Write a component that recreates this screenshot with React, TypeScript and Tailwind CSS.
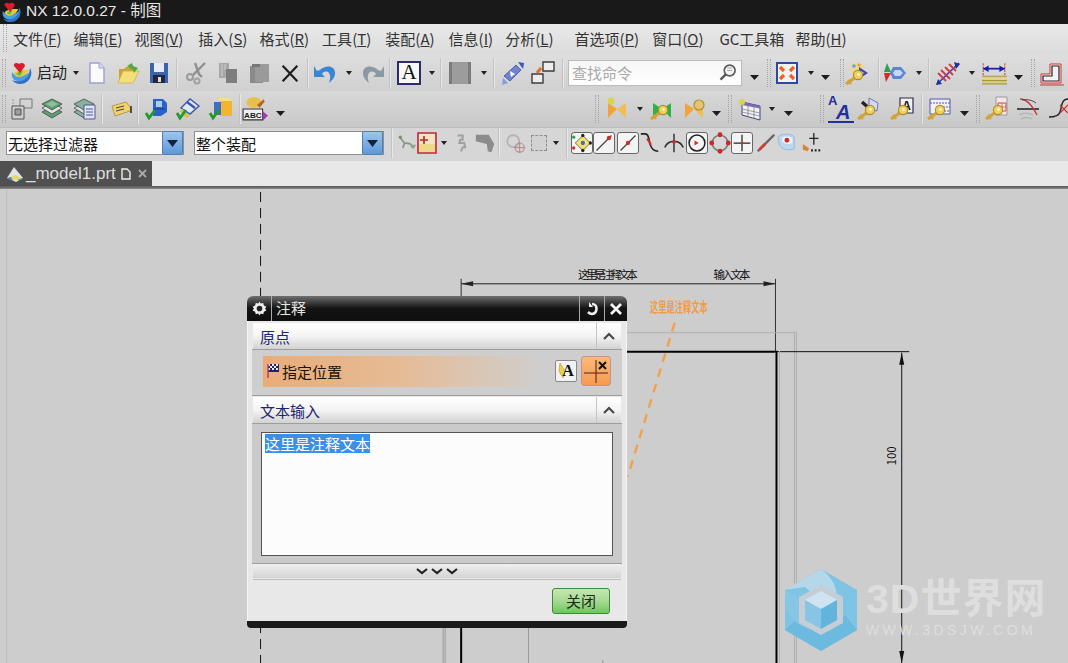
import React from "react";

const S = ({ c, children }: { c: string; children?: React.ReactNode }) => (
  <div className={`flex h-full shrink-0 items-center justify-center ${c}`}>{children}</div>
);
const Grip = ({ c = "w-[6px]" }: { c?: string }) => (
  <div className={`flex h-full shrink-0 items-center justify-center ${c}`}>
    <div className="h-[28px] w-[4px] border-x border-dotted border-[#a4a4a4]" />
  </div>
);
const Sep = ({ c = "w-[4px]" }: { c?: string }) => (
  <div className={`flex h-full shrink-0 items-center justify-center ${c}`}>
    <div className="h-[30px] w-[2px] border-l border-r border-l-[#c2c2c2] border-r-[#e8e8e8]" />
  </div>
);
const Dd = ({ c }: { c: string }) => (
  <div className={`flex h-full shrink-0 items-center justify-center ${c}`}>
    <svg width="6" height="4" viewBox="0 0 6 4"><path d="M0 0h6L3 4z" fill="#222" /></svg>
  </div>
);
const DdB = ({ c }: { c: string }) => (
  <div className={`flex h-full shrink-0 items-center justify-center pt-[9px] ${c}`}>
    <svg width="9" height="5" viewBox="0 0 9 5"><path d="M0 0h9L4.5 5z" fill="#1c1c1c" /></svg>
  </div>
);
const Ic = ({ children, size = 24 }: { children: React.ReactNode; size?: number }) => (
  <svg width={size} height={size} viewBox="0 0 24 24" className="shrink-0 overflow-visible">{children}</svg>
);

const Globe = ({ size = 24 }: { size?: number }) => (
  <Ic size={size}>
    <path d="M20 7c3 5 1 12-5 15-5 2-10 1-13-3 4 2 9 2 13-2 3-3 5-6 5-10z" fill="#2f72c8" />
    <path d="M2 11c-1 5 1 8 5 9 6 1 11-3 13-9-4 3-9 5-13 4-2-1-4-2-5-4z" fill="#48a0e0" />
    <path d="M4 12c3-3 9-4 15-3-2 4-6 7-10 7-3 0-5-2-5-4z" fill="#eac83c" />
    <path d="M6 13c2-2 5-3 7-3l-3 5z" fill="#62b84a" />
    <path d="M10 12 4 5C3 2 7 1 9 3c2-2 6-1 6 2z" fill="#d81e2c" />
  </Ic>
);
const KeyI = () => (
  <g>
    <path d="M1 22l10-7" stroke="#d0a436" strokeWidth="3.2" />
    <path d="M3 18l3 4" stroke="#d0a436" strokeWidth="2.4" />
    <circle cx="13" cy="13" r="4.6" fill="#ecd060" stroke="#b48a24" strokeWidth="1.1" />
    <circle cx="13.5" cy="12.5" r="1.4" fill="#fff6c0" />
  </g>
);
const Bow = ({ a = "#f2a33c", b = "#f4bc54" }: { a?: string; b?: string }) => (
  <g>
    <path d="M3 6l9 6-9 9z" fill={a} />
    <path d="M21 6l-9 6 9 9z" fill={b} />
  </g>
);
const Check = () => <path d="M1 16l3 5 6-8" fill="none" stroke="#1f9a2c" strokeWidth="2.8" />;

const Doc = () => (
  <Ic><path d="M5 2h9l5 5v15H5z" fill="#fbfbfb" stroke="#9c9fdc" strokeWidth="1.4" /><path d="M14 2v5h5" fill="#dedff0" stroke="#9c9fdc" /></Ic>
);
const Open = () => (
  <Ic><path d="M3 8h5l2-2h8v5H7L3 21z" fill="#c9a33a" /><path d="M7 10h16l-6 12H2z" fill="#f4e07a" stroke="#cfae44" strokeWidth=".8" /><path d="M11 5l5-3 1 3 5 2-4 5-1-3z" fill="#52a83c" /></Ic>
);
const Save = () => (
  <Ic><path d="M3 2h18v20H3z" fill="#3c64ac" /><path d="M7 2h10v9H7z" fill="#e6eaf2" /><path d="M6 14h12v8H6z" fill="#23273c" /><path d="M11 16h3v5h-3z" fill="#d8dde8" /></Ic>
);
const Cut = () => (
  <Ic><path d="M21 2 9 14M11 2l4 11 3 3" stroke="#8f8f8f" strokeWidth="2.4" fill="none" /><circle cx="6" cy="16" r="3" fill="none" stroke="#9a9a9a" strokeWidth="2" /><circle cx="13" cy="20" r="2.6" fill="none" stroke="#a2a2a2" strokeWidth="2" /></Ic>
);
const Copy = () => (
  <Ic><path d="M3 2h10v15H3z" fill="#a8a8a8" /><path d="M10 8h11v14H10z" fill="#7e7e7e" /><path d="M6 3v12M9 3v6" stroke="#cfcfcf" /></Ic>
);
const Paste = () => (
  <Ic><path d="M3 5h13v17H3z" fill="#8a8a8a" /><path d="M8 3h14v18H8z" fill="#9a9a9a" /><path d="M5 3h8v3H5z" fill="#777" /></Ic>
);
const XI = () => (
  <Ic size={22}><path d="M4 4l16 17M20 4 4 21" stroke="#1e1e1e" strokeWidth="2.4" /></Ic>
);
const Undo = ({ gray }: { gray?: boolean }) => (
  <Ic>
    <g transform={gray ? "translate(24,0) scale(-1,1)" : undefined}>
      <path d="M7 9c5-5 14-5 15 2 .5 4-2 8-6 11 1-3 2-7 0-10-2-2-5-2-7 1l3 3H1V5l3 5z" fill={gray ? "#8b9aa2" : "#3a86d4"} />
    </g>
  </Ic>
);
const ABox = () => (
  <div className="flex h-[24px] w-[24px] items-center justify-center border-2 border-[#2b2b70] bg-[#f8f8f8] [font-family:'Liberation_Serif',serif] text-[21px] leading-none text-[#111]">A</div>
);
const Rect = () => <div className="h-[22px] w-[22px] border-x-[3px] border-[#7c7c7c] bg-[#9c9c9c]" />;
const Diamond = () => (
  <Ic><path d="M15 4l5 5-11 11-6-5z" fill="#6f83d0" stroke="#3b4fa0" strokeWidth=".8" /><path d="M9 10l5 3-4 3z" fill="#fff" /><path d="M17 1l6 1-1 6z" fill="#3357c4" /><path d="M2 17l5 5-6 2z" fill="#7f9ee0" /></Ic>
);
const Squares = () => (
  <Ic><path d="M12 1h11v9H12zM1 13h11v9H1z" fill="#ededed" stroke="#3c3c3c" strokeWidth="1.4" /><path d="M6 12l4-5" stroke="#e0702a" strokeWidth="3" /></Ic>
);
const Lens = () => (
  <Ic size={20}><circle cx="14" cy="9" r="6.5" fill="#f4f4f4" stroke="#5a5a5a" strokeWidth="2" /><path d="M10 13l-7 7M5 16l2 2" stroke="#5a5a5a" strokeWidth="3" /><path d="M11 6h6M11 9h6" stroke="#9a9a9a" /></Ic>
);
const Fit = () => (
  <Ic>
    <path d="M2 2h20v20H2z" fill="#f4f2ee" stroke="#2b4aa8" strokeWidth="2" />
    <path d="M5 6l4 4M19 6l-4 4M5 18l4-4M19 18l-4-4" stroke="#e8642c" strokeWidth="3.2" />
  </Ic>
);
const Wheel = () => (
  <Ic><path d="M5 2h9l4 3-2 8H5z" fill="#ecd98e" /><circle cx="8" cy="5" r="1.8" fill="#5aa7d8" /><circle cx="13" cy="4" r="1.6" fill="#e89a3a" /><path d="M13 6l9 6-9 6z" fill="#3f49a8" /><path d="M15 10l3 2-3 2z" fill="#dfe6f6" /><g transform="translate(-1,1)"><KeyI /></g></Ic>
);
const Valve = () => (
  <Ic><path d="M10 6h8l5 6-5 6h-8l-3-6z" fill="#5a84d4" /><path d="M12 9h5l3 3-3 3h-5l-2-3z" fill="#c8d6f2" /><path d="M4 2l4 9H1z" fill="#2fa050" /><path d="M1 12h7l-5 9z" fill="#d52a2a" /></Ic>
);
const Spring = () => (
  <Ic><path d="M1 23 23 2" stroke="#2a3fb8" strokeWidth="1.6" /><path d="M5 9l9 9M9 6l8 8M2 12l8 8M13 3l7 7" stroke="#cc3a44" strokeWidth="1.8" /><path d="M18 1l6 2-4 5zM6 23l-6 1 2-6z" fill="#1f2f9c" /></Ic>
);
const Dim = () => (
  <Ic size={26}><path d="M2 3v12M22 3v12" stroke="#c04848" strokeDasharray="2 1" /><path d="M2 8h20" stroke="#1a1aa8" strokeWidth="1.6" /><path d="M2 8l5-3v6zM22 8l-5-3v6z" fill="#1a1aa8" /><path d="M1 15h23v7H1z" fill="#ddd090" /><path d="M1 15h23M1 19h23M1 22h23" stroke="#a8983c" /></Ic>
);
const Step = () => (
  <Ic><path d="M1 13h9V3h11v19H1z" fill="#f2f2f2" stroke="#d03030" strokeWidth="1" /><path d="M3 15h9V5h7v15H3z" fill="none" stroke="#222" strokeWidth="1.2" /><path d="M0 24h24" stroke="#d03030" /></Ic>
);
const R2a = () => (
  <Ic><path d="M10 2h12v9H10z" fill="none" stroke="#777" /><path d="M3 2v10" stroke="#999" strokeDasharray="2 1" /><path d="M2 9h12v13H2z" fill="#cfcfcf" stroke="#555" /><path d="M5 12h6v6H5z" fill="#9c9c9c" stroke="#555" /></Ic>
);
const Layers = ({ a, b }: { a: string; b: string }) => (
  <g stroke="#3e4a44" strokeWidth=".8">
    <path d="M2 15l10-5 10 5-10 6z" fill={b} />
    <path d="M2 11l10-5 10 5-10 6z" fill={a} />
    <path d="M2 7l10-5 10 5-10 6z" fill={b} />
  </g>
);
const Stack = () => <Ic><Layers a="#e4e4e4" b="#5f9e74" /><path d="M6 7l6-3 6 3-6 3z" fill="#8fbf9a" /></Ic>;
const Stack2 = () => (
  <Ic><Layers a="#dcdcdc" b="#88b09a" /><path d="M12 8h11v14H12z" fill="#dfe3f2" stroke="#50589c" /><path d="M14 12h7M14 15h7M14 18h7" stroke="#50589c" /></Ic>
);
const Tag = () => (
  <Ic><path d="M2 9l14-4 5 6-1 3-15 5z" fill="#f0d468" stroke="#a38a40" strokeWidth=".8" /><path d="M6 11l8-2M6 14l8-2" stroke="#444" /><path d="M21 9v7" stroke="#333" strokeWidth="1.6" /></Ic>
);
const Sh1 = () => (
  <Ic><path d="M8 2h10l4 4v9l-6 4H8z" fill="#2b62c8" /><path d="M11 4h6v6h-6z" fill="#aecbf0" /><path d="M8 12h12" stroke="#174aa0" strokeWidth="1.5" /><Check /></Ic>
);
const Sh2 = () => (
  <Ic><path d="M5 11l9-9 9 7-9 8z" fill="#e4e8f2" stroke="#3b55b4" strokeWidth="1.4" /><path d="M11 5l8 6" stroke="#3b55b4" strokeWidth="2.4" /><path d="M5 13l7 7" stroke="#d8c23c" strokeWidth="3.4" /><Check /></Ic>
);
const Sh3 = () => (
  <Ic><path d="M5 5h8v13H5z" fill="#3f6ec0" /><path d="M12 4h11v15H12z" fill="#f2b62e" /><path d="M12 4 9 1h10l4 3z" fill="#f8df80" /><Check /></Ic>
);
const Abc = () => (
  <Ic size={26}><ellipse cx="11" cy="6" rx="7" ry="5" fill="#e6c24c" /><path d="M14 8l6-5 1 2-5 6z" fill="#b5652c" /><path d="M1 12h18v10H1z" fill="#f0f0f0" stroke="#333" /><text x="10" y="20.5" textAnchor="middle" fontSize="7.5" fontWeight="700" fill="#222" fontFamily="Liberation Sans">ABC</text><path d="M19 14l5 4-5 5z" fill="#a43aa8" /></Ic>
);
const AA = () => (
  <div className="relative h-[26px] w-[26px] shrink-0 [font-family:'Liberation_Sans',sans-serif] font-bold text-[#1f2f9c]">
    <span className="absolute left-0 top-[-2px] text-[13px] leading-none">A</span>
    <span className="absolute left-[8px] top-[6px] text-[20px] italic leading-none">A</span>
    <span className="absolute bottom-[-1px] left-0 h-[2px] w-[26px] bg-[#1f2f9c]" />
  </div>
);
const KeyBrush = () => (
  <Ic><path d="M5 5l8 7" stroke="#222" strokeWidth="3.4" /><path d="M12 1l9 5-1 8-8-2z" fill="#d2d8ee" stroke="#5a62a0" strokeWidth=".8" /><KeyI /></Ic>
);
const KeyA = () => (
  <Ic><path d="M10 1h13v15H10z" fill="#f2f2f2" stroke="#2c2c50" strokeWidth="1.2" /><text x="16.5" y="13" textAnchor="middle" fontSize="12" fontWeight="700" fill="#111" fontFamily="Liberation Sans">A</text><KeyI /></Ic>
);
const KeyTbl = () => (
  <Ic><path d="M3 2h20v15H3z" fill="#f1f1f1" stroke="#5158b4" /><path d="M3 6h20M10 10h13M14 14h9" stroke="#5158b4" strokeDasharray="2 1" /><KeyI /></Ic>
);
const KeyDoc = () => (
  <Ic><path d="M11 0h11v18H11z" fill="#f4e6e6" stroke="#9a9a9a" /><path d="M13 6h8v8h-8z" fill="none" stroke="#d04848" /><path d="M17 6v8M13 10h8" stroke="#d04848" strokeWidth=".7" /><KeyI /></Ic>
);
const Cross = () => (
  <Ic><path d="M1 12h22" stroke="#111" strokeWidth="1.4" /><path d="M4 2c6 0 12 6 17 16" stroke="#c83a3c" fill="none" strokeWidth="1.4" /><path d="M6 3c5-1 10 0 14 3" stroke="#444" fill="none" /><path d="M3 18c6-3 10-2 14 0M5 22c4-2 8-2 11 0" stroke="#aaa" fill="none" /></Ic>
);
const Curve = () => (
  <Ic><path d="M22 2c-7 0-6 8-8 13-1 3-5 5-11 5" stroke="#222" fill="none" strokeWidth="1.4" /><path d="M14 8l8 8M22 8l-8 8" stroke="#cc3030" strokeWidth="1.2" /></Ic>
);
const Grid = () => (
  <Ic><path d="M4 5l18 4v14L4 18z" fill="#f2f2f4" stroke="#44447a" /><path d="M4 5l18 4v2.5L4 8z" fill="#7b6cbc" /><path d="M10 7v12M16 8v13M4 12l18 4M4 15l18 4" stroke="#778" strokeWidth=".7" /><circle cx="4" cy="5" r="3" fill="#dcd448" /></Ic>
);
const Gray1 = () => (
  <Ic size={20}><path d="M4 6l5 6 7 1 3 5M9 12l-2 6" stroke="#8b9a88" strokeWidth="2.2" fill="none" /><circle cx="4" cy="5" r="2" fill="#6f9a68" /><path d="M16 14h7l-3 5z" fill="#92a48e" /></Ic>
);
const RedBox = () => (
  <Ic size={24}><path d="M3 2h18v20H3z" fill="#efe6c4" stroke="#c8203a" strokeWidth="1.6" /><path d="M4 13h16v8H4z" fill="#ecd98a" /><path d="M5 9h8M9 5v8" stroke="#c02030" strokeWidth="1.6" /></Ic>
);
const Gray2 = () => (
  <Ic size={20}><path d="M8 3h6v5h-3l-1 4h6l1 5h-3l-2 5" stroke="#a0a0a0" strokeWidth="2.4" fill="none" /></Ic>
);
const Gray3 = () => (
  <Ic size={22}><path d="M2 3h14l6 10-3 9-4-1-1-8-12-3z" fill="#8b8b8b" /></Ic>
);
const Gray4 = () => (
  <Ic size={22}><circle cx="9" cy="10" r="6.5" fill="none" stroke="#b4b4b4" strokeWidth="2" /><circle cx="16" cy="17" r="5" fill="none" stroke="#b88f8f" strokeWidth="1.2" /><path d="M16 11v12M10 17h12" stroke="#b88080" /></Ic>
);
const Dashed = () => <div className="h-[16px] w-[16px] border border-dashed border-[#8e8e8e] bg-[#d2d2d2]" />;

const Boxed = ({ children }: { children: React.ReactNode }) => (
  <div className="flex h-[22px] w-[22px] shrink-0 items-center justify-center rounded-[3px] border border-[#666] bg-[#f4f4f4]">{children}</div>
);
const Snap = ({ kind }: { kind: string }) => {
  if (kind === "multi")
    return (
      <Ic size={20}><path d="M13 3l9 9-9 9-9-9z" fill="#f4e36a" stroke="#333" strokeWidth=".8" /><circle cx="2" cy="5" r="2" fill="#2fa050" /><circle cx="2" cy="18" r="2" fill="#d52a2a" /><circle cx="13" cy="3" r="2" fill="#222" /><circle cx="22" cy="12" r="2" fill="#222" /><circle cx="13" cy="21" r="2" fill="#222" /><circle cx="13" cy="12" r="2.6" fill="#3f6ec0" /></Ic>
    );
  if (kind === "line")
    return <Ic size={20}><path d="M3 21 21 3" stroke="#444" strokeWidth="1.4" /><circle cx="18" cy="6" r="2.6" fill="#d52a2a" /></Ic>;
  if (kind === "mid")
    return <Ic size={20}><path d="M3 21 21 3" stroke="#444" strokeWidth="1.4" /><circle cx="12" cy="12" r="2.6" fill="#d52a2a" /></Ic>;
  if (kind === "curve")
    return <Ic size={22}><path d="M2 2h5c4 0 4 7 5 11s3 8 9 8" stroke="#222" fill="none" strokeWidth="1.8" /><path d="M9 7l4 7" stroke="#d52a2a" strokeWidth="2.4" /></Ic>;
  if (kind === "perp")
    return <Ic size={22}><path d="M2 17c3-9 17-9 20 0" stroke="#333" fill="none" strokeWidth="1.8" /><path d="M12 2v20" stroke="#333" strokeWidth="1.6" /><circle cx="12" cy="11" r="2" fill="#d52a2a" /></Ic>;
  if (kind === "center")
    return <Ic size={20}><circle cx="12" cy="12" r="9.5" fill="none" stroke="#222" strokeWidth="1.8" /><path d="M9 9l5 3-5 3z" fill="#d52a2a" /></Ic>;
  if (kind === "quad")
    return <Ic size={22}><circle cx="12" cy="12" r="8.5" fill="none" stroke="#777" strokeWidth="1.8" /><circle cx="12" cy="3" r="2.6" fill="#c8282a" /><circle cx="12" cy="21" r="2.6" fill="#c8282a" /><circle cx="3" cy="12" r="2.6" fill="#c8282a" /><circle cx="21" cy="12" r="2.6" fill="#c8282a" /></Ic>;
  if (kind === "plus")
    return <Ic size={20}><path d="M12 2v20M2 12h20" stroke="#222" strokeWidth="1.5" /><circle cx="12" cy="12" r="1.4" fill="#d52a2a" /></Ic>;
  if (kind === "seg")
    return <Ic size={22}><path d="M3 21 21 3" stroke="#666" strokeWidth="2.6" /><path d="M5 19l6-6" stroke="#d04030" strokeWidth="3" /></Ic>;
  if (kind === "bubble")
    return <Ic size={22}><path d="M3 6c3-5 16-5 18 0v12c-6 3-14 1-16-4z" fill="#bcd8f0" stroke="#8cb8dc" /><path d="M8 6c3-2 9-1 11 1v5c-4 2-9 1-11-2z" fill="#eef4fa" /><circle cx="13" cy="9" r="2.6" fill="#d52a2a" /></Ic>;
  return <Ic size={22}><path d="M14 1v13M9 7h10" stroke="#222" strokeWidth="1.4" /><path d="M2 13l7 5-2 3-5-2z" fill="#d6853a" /><path d="M11 20h2M15 20h2M19 20h2" stroke="#222" strokeWidth="2.4" /></Ic>;
};

const Menu = ({ t, u, c }: { t: string; u: string; c: string }) => (
  <span className={`shrink-0 whitespace-nowrap ${c}`}>
    {t}(<span className="underline">{u}</span>)
  </span>
);

const Combo = ({ t, c }: { t: string; c: string }) => (
  <div className={`flex h-[24px] shrink-0 items-center border border-[#8f8f8f] bg-white pl-[1px] text-[15px] leading-none text-[#111] ${c}`}>
    <span className="flex-1">{t}</span>
    <div className="flex h-[24px] w-[21px] items-center justify-center rounded-[2px] border border-[#4e7fb8] bg-gradient-to-b from-[#9cc6ee] to-[#5f98d6]">
      <svg width="11" height="7" viewBox="0 0 11 7"><path d="M0 0h11L5.5 7z" fill="#14233c" /></svg>
    </div>
  </div>
);

const Chevron = () => (
  <svg width="12" height="8" viewBox="0 0 12 8"><path d="M1 7l5-5 5 5" fill="none" stroke="#4a4a4a" strokeWidth="2.2" /></svg>
);

const SectionHead = ({ t }: { t: string }) => (
  <div className="mx-[5px] flex h-[26px] items-stretch bg-gradient-to-b from-white via-[#f4f4f4] to-[#d2d2d2]">
    <div className="flex flex-1 items-center pl-[7px] text-[15px] leading-none text-[#1a2470]">{t}</div>
    <div className="flex w-[25px] items-center justify-center border-l border-[#c4c4c4]"><Chevron /></div>
  </div>
);

const Drawing = () => (
  <svg className="absolute inset-0 h-full w-full" viewBox="0 188 1068 475">
    <path d="M5.5 188V663" stroke="#bcbcbc" strokeWidth="1" />
    <path d="M260 191V663" stroke="#111" strokeWidth="1" strokeDasharray="10 6" />
    <path d="M461 278V300M776 278V351" stroke="#333" strokeWidth="1" />
    <path d="M461 283H776" stroke="#222" strokeWidth="1" />
    <path d="M461 283l12-2.5v5zM776 283l-12-2.5v5z" fill="#222" />
    <text x="578" y="278" fontSize="11.5" fill="#111" textLength="60">这里是注释文本</text>
    <text x="714" y="278" fontSize="11.5" fill="#111" textLength="37">输入文本</text>
    <path d="M620 332H797M797 331V663M795 331V663" stroke="#b0b0b0" strokeWidth="1" />
    <path d="M620 351H776" stroke="#000" strokeWidth="2" />
    <path d="M776 351H910" stroke="#111" strokeWidth="1" />
    <path d="M777 350V663" stroke="#000" strokeWidth="2" />
    <path d="M780 350V663" stroke="#b0b0b0" strokeWidth="1" />
    <path d="M902.5 352V663" stroke="#111" strokeWidth="1" />
    <path d="M902.5 352l-2.5 12h5zM902.5 663l-2.5-12h5z" fill="#111" />
    <text x="0" y="0" fontSize="11.5" fill="#111" transform="translate(897,465) rotate(-90)">100</text>
    <path d="M443 627V663M445 627V663M528.5 627V663M603 660V663" stroke="#9a9a9a" strokeWidth="1" />
    <path d="M461 627V663" stroke="#000" strokeWidth="2" />
    <text className="blur-[0.6px]" x="650" y="311" fontSize="14" fontWeight="700" fill="#f29a44" textLength="58" lengthAdjust="spacingAndGlyphs">这里是注释文本</text>
    <path d="M675 322 628 476" stroke="#f2a04c" strokeWidth="2.4" strokeDasharray="9 7" />
  </svg>
);

const Logo = () => (
  <svg width="72" height="82" viewBox="0 0 72 82" className="shrink-0">
    <path d="M36 0 72 21V61L36 82 0 61V21z" fill="#7fc3e5" />
    <path d="M36 0C50 10 56 25 48 42L20 18 0 21z" fill="#b4d8ea" />
    <path d="M0 21C-2 40 6 55 20 58L12 28z" fill="#88c6e6" />
    <path d="M10 52c12 12 35 12 50-6l12 15-36 21L0 61z" fill="#6cbae0" />
    <path d="M36 16 58 28V54L36 66 14 54V28z" fill="#c4ced4" />
    <path d="M36 22 52 31V51L36 60 20 51V31z" fill="#b9dcee" />
    <path d="M36 22 52 31 36 40 20 31z" fill="#cfe4f0" />
    <path d="M20 31 36 40V60L20 51z" fill="#88c4e4" />
    <path d="M52 31 36 40V60L52 51z" fill="#62b4dc" />
  </svg>
);

export default function App() {
  return (
    <div className="relative flex h-[663px] w-[1068px] flex-col overflow-hidden bg-[#cdcdcd] [font-family:'Noto_Sans_CJK_SC','Liberation_Sans',sans-serif]">
      {/* title */}
      <div className="flex h-[24px] shrink-0 items-center bg-[#191919] pl-[1px] text-[15.5px] leading-none text-[#e8e8e8]">
        <Globe size={22} />
        <span className="ml-[3px] pb-[3px] [font-family:'Liberation_Sans','Noto_Sans_CJK_SC',sans-serif]">NX 12.0.0.27 - 制图</span>
      </div>
      {/* menu */}
      <div className="flex h-[30px] shrink-0 items-center bg-gradient-to-b from-[#e9e9e9] to-[#dcdcdc] pb-[2px] text-[15px] leading-none text-[#333]">
        <Grip c="w-[8px] ml-[1px]" />
        <Menu t="文件" u="F" c="ml-[4px]" />
        <Menu t="编辑" u="E" c="ml-[12px]" />
        <Menu t="视图" u="V" c="ml-[12px]" />
        <Menu t="插入" u="S" c="ml-[15px]" />
        <Menu t="格式" u="R" c="ml-[12px]" />
        <Menu t="工具" u="T" c="ml-[13px]" />
        <Menu t="装配" u="A" c="ml-[14px]" />
        <Menu t="信息" u="I" c="ml-[14px]" />
        <Menu t="分析" u="L" c="ml-[12px]" />
        <Menu t="首选项" u="P" c="ml-[21px]" />
        <Menu t="窗口" u="O" c="ml-[13px]" />
        <span className="ml-[16px] shrink-0">GC工具箱</span>
        <Menu t="帮助" u="H" c="ml-[11px]" />
      </div>
      {/* toolbar 1 */}
      <div className="flex h-[37px] shrink-0 items-center overflow-hidden bg-gradient-to-b from-[#dedede] to-[#d0d0d0]">
        <Grip c="w-[8px]" />
        <S c="w-[28px]"><Globe /></S>
        <S c="w-[36px] justify-start pl-[1px] text-[15px] text-[#222]">启动</S>
        <Dd c="w-[8px]" />
        <S c="w-[34px]"><Doc /></S>
        <S c="w-[28px]"><Open /></S>
        <S c="w-[34px]"><Save /></S>
        <Sep c="w-[2px]" />
        <S c="w-[36px]"><Cut /></S>
        <S c="w-[28px]"><Copy /></S>
        <S c="w-[34px]"><Paste /></S>
        <S c="w-[28px]"><XI /></S>
        <Sep c="w-[8px]" />
        <S c="w-[26px]"><Undo /></S>
        <Dd c="w-[22px]" />
        <S c="w-[26px]"><Undo gray /></S>
        <Sep c="w-[8px]" />
        <S c="w-[30px]"><ABox /></S>
        <Dd c="w-[16px]" />
        <Sep c="w-[2px]" />
        <S c="w-[36px]"><Rect /></S>
        <Dd c="w-[12px]" />
        <Sep c="w-[8px]" />
        <S c="w-[30px]"><Diamond /></S>
        <S c="w-[30px]"><Squares /></S>
        <Sep c="w-[10px]" />
        <div className="flex h-[26px] w-[174px] shrink-0 items-center justify-between border border-[#bcbcbc] bg-gradient-to-b from-[#f6f6f6] to-[#ffffff] px-[3px] text-[15px] leading-none text-[#a9a9a9]">
          <span>查找命令</span>
          <Lens />
        </div>
        <DdB c="w-[24px]" />
        <Grip />
        <S c="w-[30px]"><Fit /></S>
        <Dd c="w-[18px]" />
        <DdB c="w-[10px]" />
        <div className="w-[8px] shrink-0" />
        <Grip c="w-[8px]" />
        <S c="w-[24px]"><Wheel /></S>
        <Sep c="w-[18px]" />
        <S c="w-[14px]"><Valve /></S>
        <div className="w-[12px] shrink-0" />
        <Dd c="w-[10px]" />
        <Sep c="w-[10px]" />
        <S c="w-[28px]"><Spring /></S>
        <Dd c="w-[20px]" />
        <S c="w-[24px]"><Dim /></S>
        <DdB c="w-[24px]" />
        <Grip />
        <S c="w-[32px]"><Step /></S>
      </div>
      {/* toolbar 2 */}
      <div className="flex h-[36px] shrink-0 items-center overflow-hidden bg-gradient-to-b from-[#d8d8d8] to-[#c8c8c8]">
        <Grip c="w-[8px]" />
        <S c="w-[28px]"><R2a /></S>
        <S c="w-[32px]"><Stack /></S>
        <S c="w-[32px]"><Stack2 /></S>
        <Sep />
        <div className="w-[4px] shrink-0" />
        <S c="w-[28px]"><Tag /></S>
        <Sep />
        <S c="w-[34px]"><Sh1 /></S>
        <S c="w-[28px]"><Sh2 /></S>
        <div className="w-[2px] shrink-0" />
        <S c="w-[34px]"><Sh3 /></S>
        <Sep />
        <S c="w-[26px]"><Abc /></S>
        <DdB c="w-[24px]" />
        <div className="w-[302px] shrink-0" />
        <Grip />
        <S c="w-[34px]"><Ic><Bow /><circle cx="6" cy="4" r="3.4" fill="#dcd448" /></Ic></S>
        <Dd c="w-[12px]" />
        <S c="w-[32px]"><Ic><Bow a="#2fb04a" b="#2fb04a" /><KeyI /></Ic></S>
        <S c="w-[32px]"><Ic><Bow /><circle cx="17" cy="8" r="5" fill="#e4c474" stroke="#b08c34" strokeWidth="1.2" /></Ic></S>
        <DdB c="w-[12px]" />
        <div className="w-[5px] shrink-0" />
        <Grip />
        <S c="w-[34px]"><Grid /></S>
        <Dd c="w-[10px]" />
        <DdB c="w-[22px]" />
        <div className="w-[20px] shrink-0" />
        <Grip />
        <S c="w-[32px]"><AA /></S>
        <S c="w-[24px]"><KeyBrush /></S>
        <div className="w-[3px] shrink-0" />
        <S c="w-[36px]"><KeyA /></S>
        <Sep c="w-[3px]" />
        <S c="w-[32px]"><KeyTbl /></S>
        <DdB c="w-[18px]" />
        <div className="w-[2px] shrink-0" />
        <Grip />
        <S c="w-[32px]"><KeyDoc /></S>
        <S c="w-[30px]"><Cross /></S>
        <S c="w-[30px]"><Curve /></S>
      </div>
      {/* filter row */}
      <div className="flex h-[34px] shrink-0 items-center overflow-hidden border-t border-[#bdbdbd] bg-[#d6d6d6] pb-[3px] pl-[6px]">
        <Combo t="无选择过滤器" c="w-[178px]" />
        <div className="w-[10px] shrink-0" />
        <Combo t="整个装配" c="w-[190px]" />
        <Sep c="w-[16px]" />
        <S c="w-[14px]"><Gray1 /></S>
        <S c="w-[26px]"><RedBox /></S>
        <Dd c="w-[8px]" />
        <S c="w-[26px]"><Gray2 /></S>
        <S c="w-[22px]"><Gray3 /></S>
        <Sep c="w-[6px]" />
        <S c="w-[28px]"><Gray4 /></S>
        <S c="w-[18px]"><Dashed /></S>
        <Dd c="w-[16px]" />
        <Sep c="w-[6px]" />
        <S c="w-[24px]"><Boxed><Snap kind="multi" /></Boxed></S>
        <S c="w-[20px]"><Boxed><Snap kind="line" /></Boxed></S>
        <S c="w-[28px]"><Boxed><Snap kind="mid" /></Boxed></S>
        <S c="w-[16px]"><Snap kind="curve" /></S>
        <S c="w-[32px]"><Snap kind="perp" /></S>
        <S c="w-[14px]"><Boxed><Snap kind="center" /></Boxed></S>
        <S c="w-[32px]"><Snap kind="quad" /></S>
        <S c="w-[12px]"><Boxed><Snap kind="plus" /></Boxed></S>
        <S c="w-[36px]"><Snap kind="seg" /></S>
        <S c="w-[4px]"><Snap kind="bubble" /></S>
        <S c="w-[48px]"><Snap kind="last" /></S>
      </div>
      {/* tabs */}
      <div className="flex h-[25px] shrink-0 bg-[#e8e8e8]">
        <div className="flex w-[152px] items-center bg-[#505050] pl-[5px] text-[17px] leading-none text-[#dedede] [font-family:'Liberation_Sans',sans-serif]">
          <svg width="20" height="18" viewBox="0 0 20 18" className="shrink-0"><path d="M2 13 9 2l9 11-7 4z" fill="#dfe2ea" /><path d="M4 13l6-3 6 3-6 2z" fill="#e8d85a" /><path d="M2 13l4-1 2 4z" fill="#4a7fd0" /><path d="M12 15l5-2v2z" fill="#4aa84a" /></svg>
          <span className="ml-[1px]">_model1.prt</span>
          <svg width="10" height="12" viewBox="0 0 10 12" className="ml-[5px] shrink-0"><path d="M1 1h5l3 3v7H1z" fill="#555" stroke="#eee" strokeWidth="1.4" /></svg>
          <svg width="9" height="9" viewBox="0 0 9 9" className="ml-[7px] shrink-0"><path d="M1 1l7 7M8 1 1 8" stroke="#a8a8a8" strokeWidth="1.8" /></svg>
        </div>
      </div>
      <div className="h-[3px] shrink-0 bg-gradient-to-b from-[#555] to-[#8a8a8a]" />
      {/* canvas */}
      <div className="relative flex-1 bg-[#cdcdcd]">
        <Drawing />
        {/* watermark */}
        <div className="absolute left-[785px] top-[380px] flex items-start">
          <Logo />
          <div className="ml-[9px] flex flex-col text-[#dedede] [font-family:'Liberation_Sans','Noto_Sans_CJK_SC',sans-serif]">
            <span className="mt-[8px] text-[41px] font-bold leading-[44px] tracking-[1px]">3D世界网</span>
            <span className="mt-[2px] text-[14px] leading-[14px] tracking-[3.4px]">WWW.3DSJW.COM</span>
          </div>
        </div>
        {/* dialog */}
        <div className="absolute left-[247px] top-[107px] flex h-[332px] w-[380px] flex-col overflow-hidden rounded-t-[6px] rounded-b-[4px] bg-[#e8e8e8]">
          <div className="flex h-[25px] shrink-0 items-stretch bg-gradient-to-b from-[#707070] via-[#141414] to-[#0e0e0e] text-white">
            <div className="flex w-[25px] items-center justify-center border-r border-[#aaa]">
              <svg width="15" height="15" viewBox="0 0 24 24"><path d="M12 1l2 3 4-1 1 4 4 2-2 3 2 3-4 2-1 4-4-1-2 3-2-3-4 1-1-4-4-2 2-3-2-3 4-2 1-4 4 1z" fill="#eee" /><circle cx="12" cy="12" r="4.5" fill="#222" /></svg>
            </div>
            <div className="flex flex-1 items-center pb-[2px] pl-[4px] text-[15px] leading-none text-[#e6e6e6]">注释</div>
            <div className="flex w-[25px] items-center justify-center border-l border-[#aaa]">
              <svg width="14" height="14" viewBox="0 0 14 14"><path d="M7 2c6 0 6 9 0 10-2 0-3-1-4-2" fill="none" stroke="#eee" strokeWidth="2.6" /><path d="M4 0v5h4z" fill="#eee" /></svg>
            </div>
            <div className="flex w-[23px] items-center justify-center border-l border-[#aaa]">
              <svg width="12" height="12" viewBox="0 0 12 12"><path d="M1 1l10 10M11 1 1 11" stroke="#f4f4f4" strokeWidth="2.8" /></svg>
            </div>
          </div>
          <div className="flex flex-1 flex-col border-x border-[#f4f4f4]">
            <div className="h-[2px] shrink-0" />
            <SectionHead t="原点" />
            <div className="mx-[4px] flex h-[47px] shrink-0 items-center border-y border-[#9e9e9e] bg-[#cecece] pb-[3px] pl-[11px] pr-[11px]">
              <div className="flex h-[31px] w-[270px] items-center bg-gradient-to-r from-[#e9ac78] via-[#e6bb95] to-[#d0cdc9] pl-[3px] text-[15px] leading-none text-[#1a1208]">
                <svg width="14" height="16" viewBox="0 0 14 16" className="shrink-0"><path d="M2 1h11v8H2z" fill="#1e2470" /><path d="M2 1h2v2H2zm4 0h2v2H6zm4 0h2v2h-2zM4 3h2v2H4zm4 0h2v2H8zM2 5h2v2H2zm4 0h2v2H6zm4 0h2v2h-2z" fill="#eee" /><path d="M2 1v14" stroke="#b03a6a" strokeWidth="1.4" /></svg>
                <span className="ml-[2px]">指定位置</span>
              </div>
              <div className="flex-1" />
              <div className="relative mr-[4px] flex h-[22px] w-[22px] items-center justify-center rounded-[2px] border border-[#888] bg-[#f2f2f2]">
                <svg width="9" height="18" viewBox="0 0 9 18" className="absolute left-[2px] top-[1px]"><path d="M2 1l5 8-2 7-4-7z" fill="#e8d048" stroke="#b09828" strokeWidth=".6" /></svg>
                <span className="relative ml-[4px] [font-family:'Liberation_Serif',serif] text-[16px] font-bold leading-none text-[#111]">A</span>
              </div>
              <div className="relative h-[30px] w-[30px] shrink-0 rounded-[3px] border border-[#c89090] bg-gradient-to-b from-[#fbb97a] to-[#f79a4e]">
                <svg width="28" height="28" viewBox="0 0 28 28"><path d="M2 16h24M14 3v23" stroke="#3a2a1a" strokeWidth="1" /><circle cx="14" cy="16" r="1.4" fill="#d02020" /><path d="M17 5l7 7M24 5l-7 7" stroke="#111" strokeWidth="2" /></svg>
              </div>
            </div>
            <div className="h-[1px] shrink-0" />
            <SectionHead t="文本输入" />
            <div className="mx-[4px] flex h-[141px] shrink-0 flex-col border-y border-[#9e9e9e] bg-[#cacaca] px-[9px] pb-[7px] pt-[8px]">
              <div className="flex-1 border border-[#555] bg-[#fcfcfc] pl-[3px] pt-[1px] text-[15px] leading-none">
                <span className="inline-block bg-[#3a90e8] py-[2px] text-white">这里是注释文本</span>
              </div>
            </div>
            <div className="mx-[5px] flex h-[14px] shrink-0 items-center justify-center gap-[3px] bg-gradient-to-b from-[#f0f0f0] to-[#d4d4d4]">
              {[0, 1, 2].map((i) => (
                <svg key={i} width="12" height="7" viewBox="0 0 12 7"><path d="M1 1l5 4 5-4" fill="none" stroke="#222" strokeWidth="2.2" /></svg>
              ))}
            </div>
            <div className="mx-[5px] mt-[1px] h-[1px] shrink-0 bg-[#bcbcbc]" />
            <div className="flex flex-1 items-center justify-end pr-[16px]">
              <div className="flex h-[26px] w-[58px] items-center justify-center rounded-[3px] border border-[#3f8a3a] bg-gradient-to-b from-[#c4e8b4] via-[#a6da92] to-[#6cc85a] text-[15px] leading-none text-[#1c2a1c]">关闭</div>
            </div>
          </div>
          <div className="h-[7px] shrink-0 bg-[#1a1a1a]" />
        </div>
      </div>
    </div>
  );
}
